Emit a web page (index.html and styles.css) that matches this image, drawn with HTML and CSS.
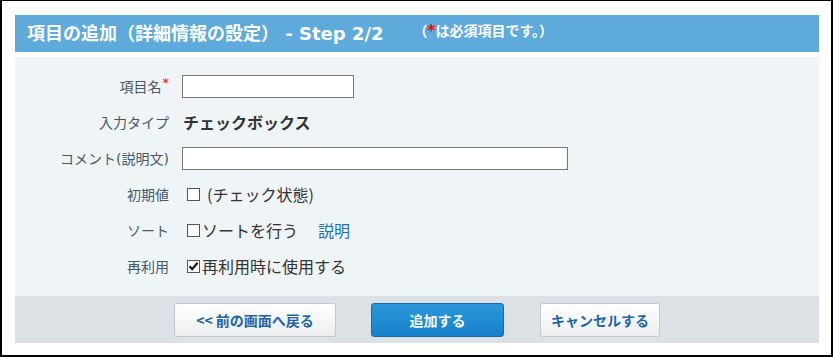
FILE: index.html
```html
<!DOCTYPE html>
<html lang="ja">
<head>
<meta charset="utf-8">
<title>項目の追加</title>
<link rel="stylesheet" href="styles.css">
</head>
<body>
<div class="frame">
  <div class="header">
    <h1 class="title">項目の追加（詳細情報の設定） - Step 2/2</h1>
    <span class="notice">（<span class="req">*</span>は必須項目です。）</span>
  </div>
  <div class="form">
    <div class="label">項目名<span class="req-mark">*</span></div>
    <div class="field"><input class="text short" type="text"></div>

    <div class="label">入力タイプ</div>
    <div class="field"><span class="type-value">チェックボックス</span></div>

    <div class="label wide-latin">コメント(説明文)</div>
    <div class="field"><input class="text long" type="text"></div>

    <div class="label">初期値</div>
    <div class="field"><span class="cb"></span><span class="val spaced">(チェック状態)</span></div>

    <div class="label">ソート</div>
    <div class="field"><span class="cb"></span><span class="val">ソートを行う</span><a class="link" href="#">説明</a></div>

    <div class="label">再利用</div>
    <div class="field"><span class="cb checked"><svg viewBox="0 0 13 13" width="13" height="13"><path d="M2.5 6.2 L5.2 9.2 L10.6 2.8" fill="none" stroke="#111" stroke-width="2.2"/></svg></span><span class="val">再利用時に使用する</span></div>
  </div>
  <div class="footer">
    <button class="btn btn-white back" type="button">&lt;&lt; 前の画面へ戻る</button>
    <button class="btn btn-blue add" type="button">追加する</button>
    <button class="btn btn-white cancel" type="button">キャンセルする</button>
  </div>
</div>
</body>
</html>
```
FILE: styles.css
```css
html, body {
  margin: 0;
  padding: 0;
  background: #fff;
}
body {
  font-family: "Noto Sans CJK JP", "Noto Sans", sans-serif;
}
.frame {
  box-sizing: border-box;
  width: 833px;
  height: 357px;
  border-style: solid;
  border-color: #000;
  border-width: 1px 2px 2px 2px;
  padding: 14px 12px 0 13px;
}
.header {
  height: 37px;
  background: #5eaadb;
  display: flex;
  align-items: flex-start;
  padding-left: 12px;
  color: #fff;
}
.title {
  margin: 0;
  font-family: "DejaVu Sans", "Noto Sans CJK JP", sans-serif;
  font-size: 18px;
  font-weight: bold;
  line-height: 37px;
  white-space: nowrap;
}
.notice {
  margin-left: 30px;
  margin-top: 6px;
  font-size: 14px;
  font-weight: bold;
  line-height: 18px;
  white-space: nowrap;
}
.req {
  color: #ff0000;
  font-family: "DejaVu Sans", sans-serif;
  font-size: 15px;
}
.form {
  margin-top: 5px;
  height: 239px;
  box-sizing: border-box;
  background: #eff4f7;
  padding-top: 11px;
  display: grid;
  grid-template-columns: 154px 1fr;
  grid-auto-rows: 36px;
  column-gap: 13px;
}
.label {
  display: flex;
  align-items: center;
  justify-content: flex-end;
  font-size: 14px;
  color: #4a5866;
  white-space: nowrap;
}
.wide-latin {
  font-family: "DejaVu Sans", "Noto Sans CJK JP", sans-serif;
}
.req-mark {
  color: #ff0000;
  font-family: "DejaVu Sans", sans-serif;
  font-size: 13px;
  align-self: flex-start;
  margin-top: 7px;
  margin-left: 1px;
}
.field {
  display: flex;
  align-items: center;
  font-size: 16px;
  color: #333;
  white-space: nowrap;
}
.text {
  box-sizing: border-box;
  height: 23px;
  border: 1px solid #767676;
  background: #fff;
  margin: 0;
  padding: 0 3px;
}
.short {
  width: 172px;
}
.long {
  width: 386px;
}
.type-value {
  font-weight: bold;
  margin-left: 1px;
  color: #333;
}
.cb {
  box-sizing: border-box;
  width: 13px;
  height: 13px;
  border: 1px solid #555;
  background: #fff;
  margin-left: 5px;
  margin-right: 2px;
  display: inline-flex;
  align-items: center;
  justify-content: center;
  position: relative;
}
.cb svg {
  position: absolute;
  left: -1px;
  top: -1px;
}
.spaced {
  margin-left: 5px;
}
.link {
  color: #1f6fb6;
  text-decoration: none;
  margin-left: 20px;
}
.footer {
  height: 47px;
  box-sizing: border-box;
  background: #dce1e5;
  display: flex;
  justify-content: center;
  align-items: flex-start;
  padding-top: 7px;
  gap: 35px;
}
.btn {
  box-sizing: border-box;
  height: 34px;
  border-radius: 3px;
  font-family: "Noto Sans CJK JP", "Noto Sans", sans-serif;
  font-size: 14px;
  font-weight: bold;
  padding: 0;
  margin: 0;
  cursor: pointer;
}
.btn-white {
  background: linear-gradient(#ffffff, #eceeef);
  border: 1px solid #c2c9ce;
  color: #1f64a8;
}
.btn-blue {
  background: linear-gradient(#2b98da, #1580cb);
  border: 1px solid #1b6aa4;
  color: #fff;
}
.back {
  width: 162px;
}
.add {
  width: 133px;
}
.cancel {
  width: 120px;
  margin-left: 1px;
}
```
